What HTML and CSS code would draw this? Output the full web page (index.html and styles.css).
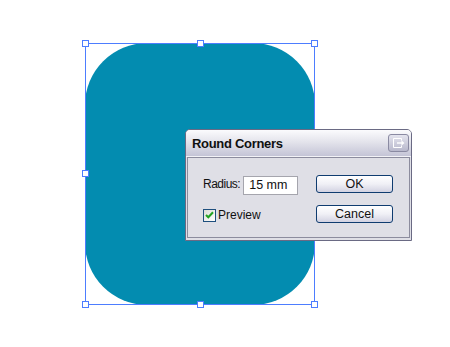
FILE: index.html
```html
<!DOCTYPE html>
<html lang="en">
<head>
    <meta charset="UTF-8">
    <title>Round Corners</title>
    <link rel="stylesheet" href="styles.css">
</head>
<body>
    <div class="artboard">
        <div class="shape"></div>
        <div class="selection">
            <span class="handle h-tl"></span>
            <span class="handle h-tc"></span>
            <span class="handle h-tr"></span>
            <span class="handle h-ml"></span>
            <span class="handle h-mr"></span>
            <span class="handle h-bl"></span>
            <span class="handle h-bc"></span>
            <span class="handle h-br"></span>
        </div>

        <div class="dialog">
            <div class="titlebar">
                <span class="title">Round Corners</span>
                <button class="menu-btn">
                    <svg width="12" height="10" viewBox="0 0 12 10">
                        <path d="M8.5 2.5V0.5H0.5V9.5H8.5V7.5" fill="none" stroke="#fff" stroke-width="1"/>
                        <path d="M4 5H9" stroke="#fff" stroke-width="1.4"/>
                        <path d="M8.5 2.5L11.5 5L8.5 7.5Z" fill="#fff"/>
                    </svg>
                </button>
            </div>
            <div class="panel">
                <div class="row">
                    <div class="field">
                        <label class="label label-tight">Radius:</label>
                        <input class="text-input" type="text" value="15 mm">
                    </div>
                    <button class="btn">OK</button>
                </div>
                <div class="row">
                    <div class="field check">
                        <span class="checkbox">
                            <svg width="9" height="8" viewBox="0 0 9 8">
                                <path d="M1 4L3.3 6.3L8 1.2" fill="none" stroke="#22a222" stroke-width="2"/>
                            </svg>
                        </span>
                        <span class="label">Preview</span>
                    </div>
                    <button class="btn">Cancel</button>
                </div>
            </div>
        </div>
    </div>
</body>
</html>
```
FILE: styles.css
```css
body {
    margin: 0;
    background: #fff;
    font-family: "Liberation Sans", Arial, sans-serif;
}
.artboard {
    position: relative;
    width: 450px;
    height: 347px;
    overflow: hidden;
}
.shape {
    position: absolute;
    left: 85px;
    top: 43px;
    width: 230px;
    height: 262px;
    border-radius: 62px;
    background: #038cb0;
}
.selection {
    position: absolute;
    left: 85px;
    top: 43px;
    width: 230px;
    height: 262px;
    box-sizing: border-box;
    border: 1px solid #4d7dff;
}
.handle {
    position: absolute;
    width: 7px;
    height: 7px;
    box-sizing: border-box;
    border: 1px solid #4d7dff;
    background: #fff;
}
.h-tl { left: -4px; top: -4px; }
.h-tc { left: 111px; top: -4px; }
.h-tr { right: -4px; top: -4px; }
.h-ml { left: -4px; top: 126px; }
.h-mr { right: -4px; top: 126px; }
.h-bl { left: -4px; bottom: -4px; }
.h-bc { left: 111px; bottom: -4px; }
.h-br { right: -4px; bottom: -4px; }

.dialog {
    position: absolute;
    left: 185px;
    top: 129px;
    width: 227px;
    height: 112px;
    box-sizing: border-box;
    border: 1px solid #6a6a84;
    border-radius: 5px 5px 0 0;
    padding: 0 1px 2px 1px;
    background: #dfdfe6;
    display: flex;
    flex-direction: column;
}
.titlebar {
    height: 26px;
    margin: 0 -1px;
    padding: 0 2px 0 6px;
    display: flex;
    align-items: center;
    justify-content: space-between;
    border-radius: 4px 4px 0 0;
    background: linear-gradient(#fbfbfd, #e4e4ec 45%, #c4c4d6);
    border-bottom: 1px solid #f2f2f6;
}
.title {
    font-size: 13px;
    font-weight: bold;
    letter-spacing: -0.3px;
    color: #101010;
    margin-top: 1px;
}
.menu-btn {
    width: 21px;
    height: 18px;
    padding: 0;
    border: 1px solid #8a8aa2;
    border-radius: 3px;
    background: linear-gradient(#e4e4ee, #b8b8cc);
    display: flex;
    align-items: center;
    justify-content: center;
}
.panel {
    flex: 1;
    border: 1px solid #8c8c9e;
    padding: 17px 16px 0 15px;
    display: flex;
    flex-direction: column;
    gap: 12px;
}
.row {
    display: flex;
    justify-content: space-between;
    align-items: center;
    height: 18px;
}
.field {
    display: flex;
    align-items: center;
    gap: 3px;
}
.label {
    font-size: 12px;
    color: #111;
}
.label-tight {
    letter-spacing: -0.5px;
}
.text-input {
    width: 55px;
    height: 19px;
    box-sizing: border-box;
    margin-top: 2px;
    border: 1px solid #a5a5ad;
    padding: 0 5px;
    font-family: inherit;
    font-size: 12.5px;
    color: #111;
    background: #fff;
}
.check {
    gap: 2px;
    margin-top: 2px;
}
.checkbox {
    width: 13px;
    height: 13px;
    box-sizing: border-box;
    border: 1px solid #1e4f7e;
    background: linear-gradient(135deg, #dcdcd6, #fff);
    display: flex;
    align-items: center;
    justify-content: center;
}
.btn {
    width: 77px;
    height: 18px;
    padding: 0;
    border: 1px solid #0f3c70;
    border-radius: 3px;
    background: linear-gradient(#ffffff, #f0f0f6 50%, #d2d2e2);
    font-family: inherit;
    font-size: 12.5px;
    color: #111;
    line-height: 16px;
}
```
